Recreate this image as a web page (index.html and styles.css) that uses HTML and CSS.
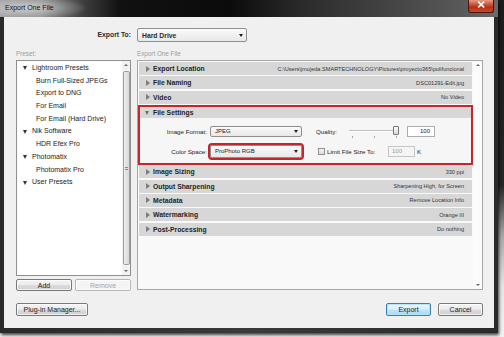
FILE: index.html
```html
<!DOCTYPE html>
<html>
<head>
<meta charset="utf-8">
<link rel="stylesheet" href="styles.css">
</head>
<body>
<div class="window">
  <div class="titlebar">
    <span class="title">Export One File</span>
    <span class="close"><svg width="26" height="13" viewBox="0 0 26 13"><path d="M11.2 3 L16.2 8 M16.2 3 L11.2 8" stroke="#fff" stroke-width="1.7" stroke-linecap="square"/></svg></span>
  </div>
  <div class="client">
    <div class="exportto-label">Export To:</div>
    <div class="select select-top"><span class="val">Hard Drive</span><span class="arrow"></span></div>

    <div class="caption">Preset:</div>
    <div class="caption">Export One File</div>

    <div class="left">
      <div class="listbox">
        <ul class="tree">
          <li class="grp"><span class="tri-down"></span>Lightroom Presets</li>
          <li class="child">Burn Full-Sized JPEGs</li>
          <li class="child">Export to DNG</li>
          <li class="child">For Email</li>
          <li class="child">For Email (Hard Drive)</li>
          <li class="grp"><span class="tri-down"></span>Nik Software</li>
          <li class="child">HDR Efex Pro</li>
          <li class="grp"><span class="tri-down"></span>Photomatix</li>
          <li class="child">Photomatix Pro</li>
          <li class="grp"><span class="tri-down"></span>User Presets</li>
        </ul>
        <div class="vscroll">
          <span class="sarrow up"></span>
          <div class="thumb"><span class="grip"></span></div>
          <span class="sarrow down"></span>
        </div>
      </div>
      <div class="btnrow">
        <button class="btn">Add</button>
        <button class="btn" disabled>Remove</button>
      </div>
    </div>

    <div class="panel">
      <div class="sections">
        <div class="sec"><span class="tri-right"></span><span class="sec-title">Export Location</span><span class="sec-val">C:\Users\jmojeda.SMARTECHNOLOGY\Pictures\proyecto365\polifuncional</span></div>
        <div class="sec"><span class="tri-right"></span><span class="sec-title">File Naming</span><span class="sec-val">DSC01291-Edit.jpg</span></div>
        <div class="sec"><span class="tri-right"></span><span class="sec-title">Video</span><span class="sec-val">No Video</span></div>
        <div class="sec-open">
          <div class="sec-head"><span class="tri-down"></span><span class="sec-title">File Settings</span></div>
          <div class="fs">
            <div class="fs-label">Image Format:</div>
            <div class="select fs-select"><span class="val">JPEG</span><span class="arrow"></span></div>
            <div class="fs-right">
              <span class="q-label">Quality:</span>
              <div class="slider">
                <span class="track"></span>
                <span class="knob"></span>
                <span class="tick t1"></span><span class="tick t2"></span><span class="tick t3"></span>
              </div>
              <span class="field q-field">100</span>
            </div>
            <div class="fs-label">Color Space:</div>
            <div class="select fs-select hl"><span class="val">ProPhoto RGB</span><span class="arrow"></span></div>
            <div class="fs-right">
              <span class="check"></span>
              <span class="lim-label">Limit File Size To:</span>
              <span class="field lim-field">100</span>
              <span class="k">K</span>
            </div>
          </div>
        </div>
        <div class="sec"><span class="tri-right"></span><span class="sec-title">Image Sizing</span><span class="sec-val">330 ppi</span></div>
        <div class="sec"><span class="tri-right"></span><span class="sec-title">Output Sharpening</span><span class="sec-val">Sharpening High, for Screen</span></div>
        <div class="sec"><span class="tri-right"></span><span class="sec-title">Metadata</span><span class="sec-val">Remove Location Info</span></div>
        <div class="sec"><span class="tri-right"></span><span class="sec-title">Watermarking</span><span class="sec-val">Orange III</span></div>
        <div class="sec"><span class="tri-right"></span><span class="sec-title">Post-Processing</span><span class="sec-val">Do nothing</span></div>
      </div>
      <div class="pscroll">
        <span class="sarrow up"></span>
        <span class="sarrow down"></span>
      </div>
    </div>

    <div class="footer-left"><button class="btn plug">Plug-in Manager...</button></div>
    <div class="footer-right">
      <button class="btn default">Export</button>
      <button class="btn">Cancel</button>
    </div>
  </div>
</div>
</body>
</html>
```
FILE: styles.css
```css
* { box-sizing: border-box; margin: 0; padding: 0; }
html, body { width: 504px; height: 337px; overflow: hidden; }
body {
  background: linear-gradient(#1c1c1c 0, #262626 55%, #a8a8a8 70%, #e6e6e6 85%, #f2f2f2 100%);
  font-family: "Liberation Sans", Arial, sans-serif;
  color: #1e1e1e;
}
.window {
  width: 498px;
  height: 333px;
  background: linear-gradient(90deg, #2a2a2a, #3a3a3a 50%, #2a2a2a);
  padding: 0 4px 5px 4px;
  display: flex;
  flex-direction: column;
  box-shadow: 1px 2px 3px rgba(0,0,0,.75);
}
.titlebar {
  height: 17px;
  margin: 0 -4px;
  padding-left: 5px;
  display: flex;
  align-items: flex-start;
  background:
    radial-gradient(ellipse 60px 12px at 28px 8px, rgba(225,225,225,.75), rgba(225,225,225,0)),
    linear-gradient(90deg, #9c9c9c 0, #8a8a8a 40px, #3c3c3c 85px, #111 120px, #0b0b0b 230px, #2a2a2a 300px, #474747 400px, #585858 460px, #6a6a6a 100%);
}
.title { font-size: 7px; line-height: 16px; color: #111; }
.close {
  margin-left: auto;
  margin-right: 4px;
  width: 26px;
  height: 13px;
  border: 1px solid #4a140c;
  border-top: 0;
  border-radius: 0 0 3px 3px;
  background: linear-gradient(#e59b86 0, #d1583c 35%, #b52f16 60%, #c8492c 100%);
  display: flex;
}
.close svg { display: block; margin: -1px 0 0 -1px; }

.client {
  flex: 1;
  background: #f0f0f0;
  display: grid;
  grid-template-columns: 115px 346px;
  column-gap: 6px;
  align-content: start;
  padding: 11px 11px 0 12px;
}
.exportto-label {
  font-size: 6.8px;
  font-weight: bold;
  line-height: 14px;
  text-align: right;
  color: #2a2a2a;
}
.select {
  display: flex;
  align-items: center;
  border: 1px solid #8e8f8f;
  border-radius: 2px;
  background: linear-gradient(#fafafa, #e8e8e8);
}
.select .val { flex: 1; white-space: nowrap; }
.select .arrow {
  width: 0; height: 0;
  border-left: 2.5px solid transparent;
  border-right: 2.5px solid transparent;
  border-top: 3px solid #222;
}
.select-top {
  width: 110px;
  height: 14px;
  padding: 0 3px 0 4px;
  font-size: 6.8px;
  font-weight: bold;
  color: #2a2a2a;
}
.caption {
  font-size: 6.3px;
  line-height: 9px;
  color: #9c9c9c;
  margin: 7px 0 2px;
}

/* left column */
.left { display: flex; flex-direction: column; }
.listbox {
  height: 216px;
  border: 1px solid #8e8f8f;
  background: #fff;
  display: flex;
}
.tree { flex: 1; list-style: none; padding-top: 1px; font-size: 7px; color: #222; }
.tree li { line-height: 12.7px; height: 12.7px; white-space: nowrap; }
.grp { display: flex; align-items: center; padding-left: 6px; }
.child { padding-left: 19px; }
.tri-down {
  width: 0; height: 0;
  border-left: 2px solid transparent;
  border-right: 2px solid transparent;
  border-top: 4px solid #333;
  margin-right: 5px;
}
.vscroll {
  width: 8px;
  background: #f2f2f2;
  display: flex;
  flex-direction: column;
  align-items: center;
  padding: 3px 0 3px;
}
.sarrow { width: 0; height: 0; border-left: 2px solid transparent; border-right: 2px solid transparent; }
.sarrow.up { border-bottom: 2.5px solid #666; }
.sarrow.down { border-top: 2.5px solid #666; }
.vscroll .thumb {
  flex: 1;
  width: 7px;
  margin: 5px 0 5px;
  border: 1px solid #9e9e9e;
  border-radius: 2px;
  background: linear-gradient(90deg, #ececec, #d8d8d8);
  display: flex;
  align-items: center;
  justify-content: center;
}
.grip { width: 3px; height: 3px; border-top: 1px solid #888; border-bottom: 1px solid #888; }
.btnrow { display: flex; gap: 3px; margin-top: 3px; height: 12px; }
.btnrow .btn { flex: 1; }

.btn {
  font-family: "Liberation Sans", Arial, sans-serif;
  font-size: 7px;
  color: #222;
  border: 1px solid #7a7a7a;
  border-radius: 2px;
  background: linear-gradient(#f4f4f4 0, #ebebeb 48%, #dcdcdc 52%, #cfcfcf 100%);
  box-shadow: inset 0 0 0 1px rgba(255,255,255,.7);
}
.btn:disabled {
  color: #a4a4a4;
  border-color: #b5b5b5;
  background: #f4f4f4;
}

/* right panel */
.panel {
  height: 230px;
  border: 1px solid #a6a6a6;
  background: #f9f9f9;
  display: flex;
}
.sections { flex: 1; padding-top: 1px; }
.sec {
  height: 13px;
  margin: 0 1px 1.4px;
  background: #d7d7d7;
  display: flex;
  align-items: center;
  padding: 0 8px 0 7px;
}
.sec-open { margin: 0 0 0 0; border: 2px solid #c4262e; }
.sec-head {
  height: 11px;
  background: #d7d7d7;
  display: flex;
  align-items: center;
  padding-left: 5px;
}
.sec-head .tri-down { border-top-color: #6e6e6e; margin-right: 4px; }
.tri-right {
  width: 0; height: 0;
  border-top: 3px solid transparent;
  border-bottom: 3px solid transparent;
  border-left: 4px solid #7c7c7c;
  margin-right: 3px;
}
.sec-title { font-size: 6.8px; font-weight: bold; color: #1e1e1e; white-space: nowrap; }
.sec-val { margin-left: auto; font-size: 5.6px; color: #333; white-space: nowrap; }

.fs {
  height: 45px;
  background: #f6f6f6;
  display: grid;
  grid-template-columns: 67px 95px 1fr;
  grid-template-rows: 12px 12px;
  column-gap: 3px;
  row-gap: 8px;
  padding-top: 7px;
  font-size: 6.2px;
  color: #222;
  align-items: center;
}
.fs-label { text-align: right; white-space: nowrap; }
.fs-select { width: 92px; height: 11px; padding: 0 3px 0 4px; font-size: 6px; }
.fs-select.hl { height: 13px; outline: 2px solid #c4262e; outline-offset: 0; }
.fs-right { display: flex; align-items: center; height: 12px; }
.q-label { margin-left: 8px; width: 33px; }
.slider { position: relative; width: 51px; height: 12px; }
.slider .track {
  position: absolute; left: 0; right: 4px; top: 5px;
  height: 2px; background: #bdbdbd; border-bottom: 1px solid #fff;
}
.slider .knob {
  position: absolute; left: 44px; top: 1px;
  width: 6px; height: 9px;
  border: 1px solid #777;
  border-radius: 1px;
  background: linear-gradient(#fbfbfb, #d8d8d8);
}
.slider .tick { position: absolute; top: 11px; width: 1px; height: 2px; background: #a8a8a8; }
.slider .t1 { left: 3px; } .slider .t2 { left: 25px; } .slider .t3 { left: 47px; }
.field {
  height: 11px;
  border: 1px solid #abadb3;
  background: #fff;
  line-height: 9px;
  font-size: 6px;
}
.q-field { width: 28px; margin-left: 7px; text-align: right; padding-right: 4px; }
.check {
  width: 7px; height: 7px;
  margin-left: 10px;
  border: 1px solid #8e8f8f;
  background: linear-gradient(#f2f2f2, #dcdcdc);
}
.lim-label { margin-left: 2px; width: 61px; white-space: nowrap; }
.lim-field { width: 27px; padding-left: 3px; color: #9a9a9a; background: #f5f5f5; border-color: #c5c5c5; }
.k { margin-left: 2px; }

.pscroll {
  width: 9px;
  background: #fbfbfb;
  display: flex;
  flex-direction: column;
  justify-content: space-between;
  align-items: center;
  padding: 3px 0;
}

.footer-left, .footer-right { margin-top: 12px; height: 13px; display: flex; }
.footer-right { justify-content: flex-end; gap: 7px; }
.plug { width: 72px; height: 13px; }
.footer-right .btn { width: 45px; height: 13px; }
.btn.default {
  border-color: #3c7fb1;
  background: linear-gradient(#eaf6fd 0, #d9f0fc 48%, #bee6fd 52%, #a7d9f5 100%);
  box-shadow: inset 0 0 0 1px rgba(180,225,250,.9);
}
```
